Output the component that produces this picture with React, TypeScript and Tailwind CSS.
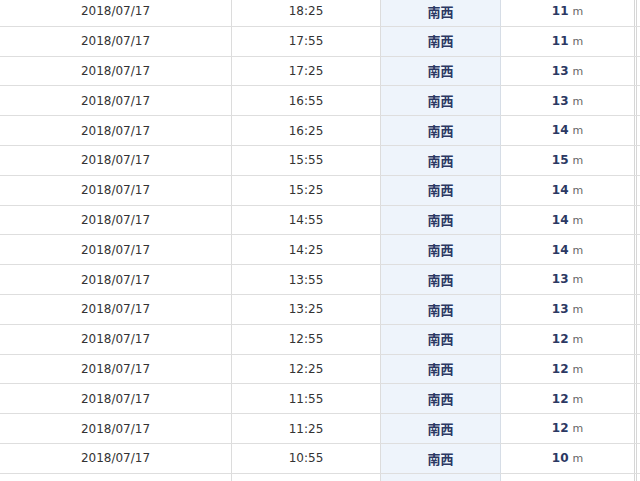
const rows: [string, string][] = [
  ['18:25', '11'],
  ['17:55', '11'],
  ['17:25', '13'],
  ['16:55', '13'],
  ['16:25', '14'],
  ['15:55', '15'],
  ['15:25', '14'],
  ['14:55', '14'],
  ['14:25', '14'],
  ['13:55', '13'],
  ['13:25', '13'],
  ['12:55', '12'],
  ['12:25', '12'],
  ['11:55', '12'],
  ['11:25', '12'],
  ['10:55', '10'],
];

const Row: React.FC<{ time?: string; speed?: string }> = ({ time, speed }) => {
  return (
    <div className="flex h-[29.8px] border-b border-[#dedede] items-center">
      <div className="w-[232px] h-full flex items-center justify-center border-r border-[#dcdcdc] text-[12px] text-[#333]">
        {time ? '2018/07/17' : ''}
      </div>
      <div className="w-[149px] h-full flex items-center justify-center border-r border-[#dcdcdc] text-[12px] text-[#333]">
        {time}
      </div>
      <div className="w-[120px] h-full flex items-center justify-center border-r border-[#d6dde6] bg-[#eef4fb] text-[13px] font-bold text-[#2b3863] [font-family:'Noto_Sans_CJK_JP',sans-serif]">
        {time ? '南西' : ''}
      </div>
      <div className="w-[136px] h-full flex items-center justify-center border-r-[3px] border-double border-[#d6d6d6]">
        {speed && (
          <span className="text-[#2b3863] font-bold text-[12px]">
            {speed}
            <span className="ml-[4px] font-normal text-[11px] text-[#666]">m</span>
          </span>
        )}
      </div>
    </div>
  );
};

export default function App() {
  return (
    <div className="w-[640px] h-[481px] overflow-hidden bg-white [font-family:'DejaVu_Sans',Verdana,sans-serif]">
      <div className="mt-[-3px]">
        {rows.map(([t, s]) => (
          <Row key={t} time={t} speed={s} />
        ))}
        <Row />
      </div>
    </div>
  );
}
